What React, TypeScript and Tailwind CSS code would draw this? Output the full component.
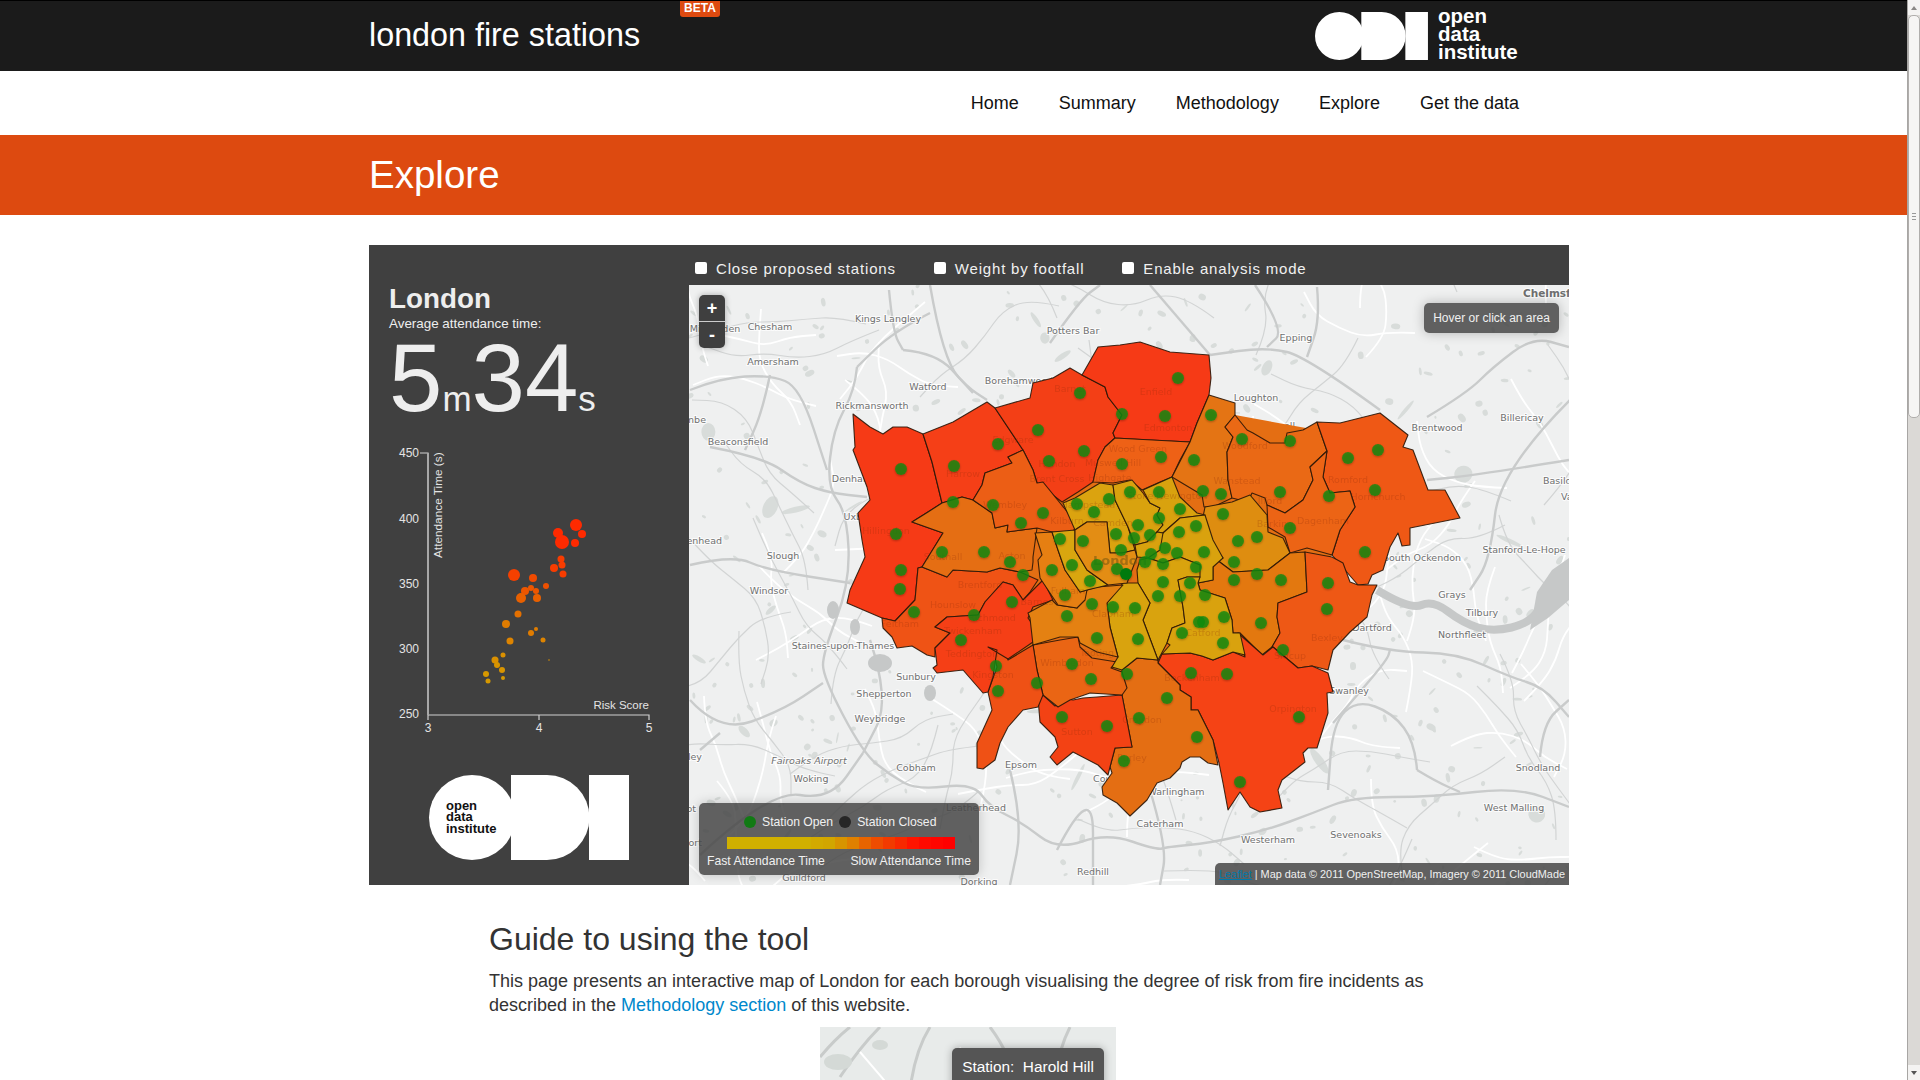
const boroughs: [string, string][] = [
  ['#f63a16', '853,414 870,427 883,434 893,427 907,427 923,434 932,462 942,503 928,512 912,522 943,533 922,567 918,568 915,600 895,621 882,618 847,603 850,590 865,557 862,540 858,513 870,500 867,487 853,450 855,447'],
  ['#f53f17', '923,434 953,422 987,402 995,408 1023,450 1008,457 1012,463 985,473 982,485 973,500 962,497 942,503 932,462'],
  ['#f33f16', '995,408 1030,398 1033,383 1053,378 1070,368 1082,375 1105,387 1108,397 1122,415 1113,433 1115,438 1105,447 1098,460 1093,482 1078,492 1062,502 1037,483 1033,470 1023,450'],
  ['#f63a16', '1082,375 1098,347 1120,345 1140,342 1170,352 1209,355 1211,378 1209,395 1197,423 1190,442 1150,440 1115,438 1113,433 1122,415 1108,397 1105,387'],
  ['#ee6116', '1115,438 1190,442 1180,460 1172,477 1160,482 1142,490 1130,480 1113,483 1093,482 1098,460 1105,447'],
  ['#e47414', '1190,442 1197,423 1209,395 1235,403 1235,415 1225,427 1233,437 1227,452 1228,480 1232,498 1213,507 1204,507 1202,495 1172,477'],
  ['#ea6915', '1235,415 1247,430 1253,433 1270,443 1285,443 1287,433 1303,430 1317,422 1327,451 1310,467 1313,480 1303,500 1285,513 1267,505 1265,498 1252,493 1248,502 1232,498 1228,480 1227,452 1233,437 1225,427'],
  ['#ef5815', '1317,422 1340,423 1380,413 1408,435 1403,447 1413,450 1428,490 1445,490 1460,518 1410,528 1410,545 1402,546 1398,533 1390,547 1383,570 1372,575 1368,584 1358,585 1332,555 1340,530 1355,507 1350,491 1330,493 1323,477 1327,451'],
  ['#ec6415', '1327,451 1310,467 1313,480 1303,500 1285,513 1267,505 1268,527 1285,537 1290,553 1307,548 1332,555 1340,530 1355,507 1350,491 1330,493 1323,477'],
  ['#de8d10', '1205,507 1232,502 1250,495 1267,515 1268,532 1283,538 1290,553 1268,570 1233,572 1217,560 1223,558 1212,547 1203,517'],
  ['#e3780f', '1305,552 1307,592 1278,603 1277,617 1280,633 1272,647 1262,655 1240,633 1233,633 1232,620 1225,598 1200,590 1198,583 1213,580 1213,567 1217,560 1233,572 1268,570 1290,553'],
  ['#ee5815', '1305,552 1332,557 1343,563 1350,582 1358,585 1377,585 1372,595 1367,617 1350,632 1333,650 1328,670 1312,666 1298,668 1273,647 1272,647 1280,633 1277,617 1278,603 1307,592'],
  ['#f54315', '1273,647 1263,655 1238,633 1245,657 1233,652 1213,660 1202,656 1190,653 1162,654 1158,663 1180,685 1180,690 1191,697 1191,710 1198,710 1213,740 1219,763 1223,783 1228,810 1240,792 1250,807 1260,812 1282,808 1278,790 1282,780 1305,762 1303,753 1308,748 1317,748 1328,713 1327,693 1333,692 1328,673 1312,666 1298,668'],
  ['#e46e13', '1122,670 1137,658 1158,660 1158,663 1180,685 1180,690 1191,697 1191,710 1198,710 1213,740 1218,765 1208,763 1200,757 1190,757 1182,762 1180,768 1170,778 1157,783 1147,800 1130,816 1117,803 1103,795 1102,787 1112,773 1110,767 1115,748 1132,747 1122,695 1123,680'],
  ['#f34214', '1043,695 1055,706 1063,698 1073,700 1083,698 1097,697 1122,695 1132,747 1115,748 1110,767 1108,775 1098,765 1073,752 1057,765 1050,757 1058,747 1055,737 1040,722 1038,698'],
  ['#ea6514', '1033,645 1060,640 1078,637 1080,647 1092,658 1117,662 1111,668 1122,672 1127,688 1122,695 1090,693 1070,700 1058,707 1043,695 1037,670'],
  ['#ef5115', '1033,645 1008,660 1005,650 992,647 997,667 988,692 992,710 977,743 977,768 983,769 995,760 1000,743 1008,727 1023,710 1038,707 1043,695 1037,670'],
  ['#ef5315', '922,567 947,577 953,570 987,572 1000,568 1020,572 1038,580 1030,592 1023,600 1013,585 1003,582 985,602 978,615 947,617 935,627 950,633 935,648 935,657 927,655 912,646 897,648 892,637 883,628 882,618 895,621 915,600 918,568'],
  ['#f53f16', '1003,582 985,602 978,615 947,617 935,627 950,633 935,648 937,665 933,668 937,673 963,670 983,693 988,692 993,677 997,650 988,647 1008,659 1033,642 1040,635 1028,618 1033,607 1053,600 1043,580 1033,590 1023,600 1013,585'],
  ['#e56e13', '912,522 928,512 942,503 962,497 973,500 992,513 995,528 1008,525 1007,532 1037,528 1033,557 1033,562 1032,570 1020,572 1000,568 987,572 953,570 947,577 922,567 943,533'],
  ['#ec5e15', '973,500 982,485 985,473 1012,463 1008,457 1023,450 1033,470 1037,483 1043,482 1078,525 1072,532 1052,532 1037,528 1007,532 1008,525 995,528 992,513'],
  ['#dba30f', '1075,498 1100,483 1113,485 1115,500 1128,527 1135,550 1122,553 1110,553 1107,522 1087,522 1075,530 1063,503'],
  ['#d9a20e', '1113,485 1132,480 1143,493 1150,503 1160,508 1157,515 1163,525 1157,532 1147,542 1135,545 1128,527 1115,500'],
  ['#d9a20e', '1143,490 1172,477 1180,497 1197,513 1205,515 1180,518 1163,533 1157,532 1163,525 1157,515 1160,508 1150,503'],
  ['#d9a20e', '1163,533 1180,518 1205,515 1213,540 1223,558 1213,567 1213,580 1198,583 1200,565 1180,557 1163,563 1148,558'],
  ['#d9a20e', '1135,545 1147,542 1157,532 1163,533 1160,550 1148,558 1137,557'],
  ['#d9a30e', '1140,560 1148,558 1163,563 1180,557 1200,565 1200,577 1187,577 1178,580 1183,607 1185,623 1172,628 1167,643 1158,660 1143,620 1150,603 1138,583 1137,570'],
  ['#d9a20e', '1200,577 1198,583 1200,590 1225,598 1232,620 1233,633 1240,633 1245,655 1233,652 1213,660 1202,656 1190,653 1162,654 1170,645 1167,643 1172,628 1185,623 1183,607 1178,580 1187,577'],
  ['#d9a30e', '1123,583 1138,583 1150,603 1143,620 1158,660 1137,658 1122,670 1112,667 1118,657 1110,627 1107,603'],
  ['#e48112', '1087,590 1097,587 1123,585 1107,603 1110,627 1118,657 1097,652 1080,643 1078,637 1060,637 1033,645 1030,618 1028,613 1052,600 1057,605 1077,608'],
  ['#e67f12', '1035,533 1052,532 1058,550 1065,570 1080,592 1087,590 1085,600 1077,608 1058,605 1040,578 1038,560 1042,555'],
  ['#d9a60f', '1052,532 1075,530 1075,550 1087,570 1108,585 1087,590 1080,592 1065,570 1058,550'],
  ['#e38d14', '1075,530 1087,522 1107,522 1110,553 1122,553 1135,550 1137,557 1127,583 1108,585 1087,570 1075,550'],
]

const dots = '1080,393 1122,414 1165,416 1178,378 1211,415 1038,430 998,444 954,466 901,469 1084,451 1049,461 1122,464 1161,457 1194,460 953,502 993,505 1043,513 1021,523 1077,504 1094,512 1109,499 1130,492 1159,492 896,534 942,552 984,552 1010,562 1023,575 901,570 900,589 1060,539 1083,541 1072,565 1052,570 1097,565 1090,581 1065,595 1121,550 1138,525 1116,534 1134,538 1150,535 1159,518 1180,509 1179,532 1196,526 1165,548 1151,554 1177,553 1145,562 1163,564 1117,569 1126,574 1196,567 1163,582 1190,583 1158,596 1180,596 1135,608 1113,607 1092,604 1067,616 1097,638 1138,639 1182,633 1199,622 1072,664 1203,491 1221,494 1280,492 1329,496 1375,490 1223,514 1290,528 1238,541 1257,537 1234,562 1257,574 1281,580 1234,580 1365,552 1328,583 1327,609 1261,623 1224,617 1223,643 1283,650 1205,595 1203,622 1204,552 1242,439 1290,441 1348,458 1378,450 914,612 974,615 1012,602 961,640 996,666 998,691 1037,683 1091,679 1062,717 1107,726 1127,674 1139,718 1124,761 1167,698 1197,737 1191,673 1227,674 1299,717 1240,782'
  .split(' ')
  .map((p) => p.split(',').map(Number))

const greyRoads = [
  '857,367 855,390 833,430 827,487 847,513 850,583 823,653 823,677 863,753 890,775 917,790 973,783 990,807 1023,823 1057,850 1107,833 1157,850 1167,847 1210,843 1267,830 1313,813 1353,797 1433,797 1517,787 1569,807',
  '1333,723 1353,700 1387,660 1390,650',
  '1380,410 1307,357 1267,347 1210,355',
  '1317,287 1320,320 1307,357',
  '930,313 893,332 857,367',
  '903,350 937,353 967,387 987,400',
  '930,285 943,360 973,393',
  '710,447 763,457 800,483 830,493 867,497',
  '690,565 733,555 767,570 850,583',
  '690,390 720,378 770,375 800,387 827,470',
  '770,375 762,413 745,450',
  '690,700 720,733 783,710 823,683',
  '720,733 700,750',
  '1569,460 1477,475 1427,480',
  '1427,417 1467,393 1493,367 1533,337 1569,347',
  '1343,640 1390,652 1457,653 1510,677 1543,687 1569,717',
  '1417,770 1415,743 1393,713 1357,700 1333,723 1328,790',
  '1540,757 1543,723 1569,700',
  '1417,770 1437,782 1460,792',
  '1050,343 1080,300 1100,285',
  '1150,285 1180,320 1210,355',
  '1255,285 1285,330 1267,347',
  '1570,400 1500,470 1490,560 1470,590',
  '889,290 893,332 903,350',
  '1057,850 1093,780 1093,885',
  '870,640 890,700 863,753',
  '1010,770 1023,823 1010,885',
  '700,855 770,790 830,800 863,753',
  '1150,790 1167,847 1160,885',
]

// turns a point list into a soft curve, the tiles have no sharp corners
const smooth = (s: string) => {
  const p = s.split(' ').map((q) => q.split(',').map(Number))
  let d = `M${p[0][0]} ${p[0][1]}`
  for (let i = 1; i < p.length - 1; i++) {
    d += `Q${p[i][0]} ${p[i][1]} ${(p[i][0] + p[i + 1][0]) / 2} ${(p[i][1] + p[i + 1][1]) / 2}`
  }
  const l = p[p.length - 1]
  return `${d}L${l[0]} ${l[1]}`
}

const hash = (n: number) => {
  const v = Math.sin(n * 12.9898) * 43758.5453
  return v - Math.floor(v)
}

const wander = (i: number, n: number, step: number) => {
  let x = 689 + hash(i + 1) * 880
  let y = 285 + hash(i + 500) * 600
  let a = hash(i + 900) * 6.28
  const pts: string[] = [`${x.toFixed(0)},${y.toFixed(0)}`]
  for (let k = 0; k < n; k++) {
    a += (hash(i * 31 + k) - 0.5) * 1.3
    x += Math.cos(a) * step
    y += Math.sin(a) * step
    pts.push(`${x.toFixed(0)},${y.toFixed(0)}`)
  }
  return smooth(pts.join(' '))
}

const thinGrey = Array.from({ length: 55 }, (_, i) => wander(i, 6, 30))
const thinWhite = Array.from({ length: 70 }, (_, i) => wander(i + 100, 5, 26))

// little patches of woodland, same every render
const woods = Array.from({ length: 520 }, (_, i) => ({
  x: 689 + hash(i + 2000) * 880,
  y: 285 + hash(i + 3000) * 600,
  rx: 1 + hash(i + 4000) * (i % 12 === 0 ? 14 : 4),
  ry: 0.8 + hash(i + 5000) * (i % 12 === 0 ? 8 : 2.5),
  r: hash(i + 6000) * 180,
}))

const labels: [string, number, number][] = [
  ['Kings Langley', 888, 318], ['Chesham', 770, 326], ['Missenden', 715, 328], ['Potters Bar', 1073, 330],
  ['Amersham', 773, 361], ['Watford', 928, 386], ['Borehamwood', 1019, 380], ['Rickmansworth', 872, 405],
  ['Beaconsfield', 738, 441], ['Denham', 852, 478], ['Uxbridge', 865, 516], ['Slough', 783, 555],
  ['Windsor', 769, 590], ['Epping', 1296, 337], ['Loughton', 1256, 397], ['Chigwell', 1275, 425],
  ['Brentwood', 1437, 427], ['Billericay', 1522, 417], ['Stanford-Le-Hope', 1524, 549], ['South Ockendon', 1422, 557],
  ['Grays', 1452, 594], ['Staines-upon-Thames', 843, 645], ['Sunbury', 916, 676], ['Shepperton', 884, 693],
  ['Weybridge', 880, 718], ['Woking', 811, 778], ['Cobham', 916, 767], ['Epsom', 1021, 764],
  ['Leatherhead', 976, 807], ['Guildford', 804, 877], ['Dorking', 979, 881], ['Coulsdon', 1115, 778],
  ['Caterham', 1160, 823], ['Warlingham', 1176, 791], ['Westerham', 1268, 839], ['Sevenoaks', 1356, 834],
  ['Redhill', 1093, 871], ['Swanley', 1349, 690], ['Dartford', 1372, 627], ['Northfleet', 1462, 634],
  ['Tilbury', 1482, 612], ['Snodland', 1538, 767], ['West Malling', 1514, 807],
]

const covered: [string, number, number][] = [
  ['Barnet', 1070, 388], ['Enfield', 1156, 391], ['Edmonton', 1168, 427], ['Wood Green', 1138, 448],
  ['Muswell Hill', 1113, 462], ['Highgate', 1110, 477], ['Edgware', 1013, 439], ['Hendon', 1057, 463],
  ['Brent Cross', 1057, 478], ['Harrow', 963, 473], ['Wembley', 1005, 504], ['Kilburn', 1067, 520],
  ['Hampstead', 1088, 504], ['Camden', 1113, 522], ['Southall', 943, 556], ['Acton', 1012, 555],
  ['Brentford', 980, 584], ['Fulham', 1068, 590], ['Barnes', 1037, 601], ['Clapham', 1113, 613],
  ['Tooting', 1097, 652], ['Wimbledon', 1067, 662], ['Hounslow', 953, 604], ['Richmond', 992, 617],
  ['Twickenham', 973, 630], ['Feltham', 900, 623], ['Teddington', 972, 653], ['Kingston', 993, 674],
  ['Sutton', 1077, 731], ['Croydon', 1142, 719], ['Purley', 1132, 757], ['Beckenham', 1192, 677],
  ['Orpington', 1293, 708], ['Catford', 1203, 632], ['Bexley', 1327, 637], ['Sidcup', 1290, 655],
  ['Woodford', 1245, 445], ['Wanstead', 1237, 480], ['Ilford', 1270, 500], ['Barking', 1275, 523],
  ['Dagenham', 1323, 520], ['Romford', 1348, 479], ['Hornchurch', 1378, 496], ['Stoke Newington', 1167, 495],
  ['Hillingdon', 886, 530],
]

const clipped: [string, number, number][] = [
  ['Wycombe', 706, 419], ['Maidenhead', 722, 540], ['Henley', 702, 756], ['Airport', 702, 842], ['Bagshot', 696, 808],
]

const risk: [number, number, number, string][] = [
  [576, 525, 6, '#ff2a00'], [582, 534, 4, '#ff2a00'], [558, 533, 5, '#ff2a00'], [562, 542, 7, '#ff2a00'],
  [575, 543, 4, '#ff2a00'], [561, 559, 3.5, '#f83c00'], [562, 565, 3.5, '#f83c00'], [554, 568, 4, '#f83c00'],
  [563, 574, 3.5, '#f83c00'], [514, 575, 6, '#f54000'], [533, 578, 4, '#f04a00'], [546, 586, 3, '#ee5000'],
  [531, 588, 3, '#ec5600'], [525, 591, 4, '#ec5600'], [536, 591, 3, '#ec5600'], [521, 598, 5, '#e86000'],
  [537, 598, 4, '#e86000'], [518, 614, 3.5, '#e47000'], [506, 624, 4, '#e07c00'], [536, 629, 2, '#e07c00'],
  [531, 633, 3, '#e07c00'], [543, 640, 2.5, '#de8400'], [510, 641, 3.5, '#de8400'], [503, 655, 2.5, '#da9000'],
  [495, 660, 3.5, '#da9000'], [549, 660, 0.8, '#da9000'], [497, 665, 3, '#d89400'], [502, 670, 3, '#d89400'],
  [486, 674, 3, '#d69800'], [503, 678, 2, '#d69800'], [488, 681, 2.5, '#d69800'],
]

const legendBar = ['#d0b000', '#d0b000', '#d0b000', '#d0b000', '#d0b000', '#d0b000', '#d0b000', '#d2aa00', '#d2a600', '#d89400', '#e08000', '#e86400', '#ee4c00', '#f23a00', '#f82800', '#ff1400', '#ff0a00', '#ff0500', '#ff0000']

const navItems = ['Home', 'Summary', 'Methodology', 'Explore', 'Get the data']
const options = ['Close proposed stations', 'Weight by footfall', 'Enable analysis mode']

const OdiMark = ({ x, y, h, fill }: { x: number; y: number; h: number; fill: string }) => {
  const r = h / 2
  const u = h / 85
  return (
    <g fill={fill}>
      <ellipse cx={x + 43 * u} cy={y + r} rx={43 * u} ry={r} />
      <path d={`M${x + 82 * u} ${y}H${x + 118 * u}A${r} ${r} 0 0 1 ${x + 118 * u} ${y + h}H${x + 82 * u}Z`} />
      <rect x={x + 160 * u} y={y} width={40 * u} height={h} />
    </g>
  )
}

const Chart = () => (
  <svg viewBox="369 445 320 300" className="block w-[320px] h-[300px]">
    <path d="M420 453H428V715H649V720M428 715V720M539 715V720" fill="none" stroke="#d0d0d0" strokeWidth="1.2" />
    <path d="M428 453V715" stroke="#a8a8a8" strokeWidth="2" />
    {[[450, 453], [400, 519], [350, 584], [300, 649], [250, 714]].map(([v, y]) => (
      <text key={v} x="419" y={y + 4} textAnchor="end" fontSize="12" fill="#e4e4e4">{v}</text>
    ))}
    {[[3, 428], [4, 539], [5, 649]].map(([v, x]) => (
      <text key={v} x={x} y="732" textAnchor="middle" fontSize="12" fill="#e4e4e4">{v}</text>
    ))}
    <text x="649" y="709" textAnchor="end" fontSize="11.5" fill="#e4e4e4">Risk Score</text>
    <text transform="translate(442 558) rotate(-90)" fontSize="11.8" fill="#e4e4e4">Attendance Time (s)</text>
    {risk.map(([x, y, r, c], i) => (
      <circle key={i} cx={x} cy={y} r={r} fill={c} />
    ))}
  </svg>
)

const LondonMap = () => (
  <svg viewBox="689 285 880 600" className="block w-[880px] h-[600px] font-['DejaVu_Sans',sans-serif]">
    <defs>
      <filter id="dotShadow" x="-50%" y="-50%" width="200%" height="200%">
        <feDropShadow dx="0" dy="1" stdDeviation="1" floodColor="#000" floodOpacity="0.35" />
      </filter>
    </defs>
    <rect x="689" y="285" width="880" height="600" fill="#eff0f0" />
    {woods.map((w, i) => (
      <ellipse key={i} cx={w.x} cy={w.y} rx={w.rx} ry={w.ry} fill="#d8dcda" transform={`rotate(${w.r} ${w.x} ${w.y})`} />
    ))}
    {thinWhite.map((d, i) => (
      <path key={i} d={d} fill="none" stroke="#ffffff" strokeWidth="1.8" />
    ))}
    {thinGrey.map((d, i) => (
      <path key={i} d={d} fill="none" stroke="#d2d4d4" strokeWidth="1.2" />
    ))}
    {greyRoads.map((d, i) => (
      <path key={i} d={smooth(d)} fill="none" stroke="#c9cbcb" strokeWidth="2.4" />
    ))}
    <path d={smooth('1377,590 1410,610 1433,600 1463,623 1493,632 1530,623 1545,600')} fill="none" stroke="#c6c8c8" strokeWidth="8" />
    <polygon points="1537,592 1552,570 1569,558 1569,600 1548,618 1530,630" fill="#c6c8c8" />
    <ellipse cx="880" cy="663" rx="12" ry="9" fill="#c6c8c8" />
    <ellipse cx="833" cy="610" rx="6" ry="9" fill="#c6c8c8" />
    <ellipse cx="855" cy="627" rx="5" ry="8" fill="#c6c8c8" />
    <ellipse cx="930" cy="693" rx="6" ry="8" fill="#c6c8c8" />
    <g fontSize="9.5" fill="#6f7070" stroke="#ffffff" strokeWidth="2" paintOrder="stroke" textAnchor="middle" strokeOpacity="0.8">
      {labels.map(([t, x, y]) => (
        <text key={t} x={x} y={y + 3.5}>{t}</text>
      ))}
      {clipped.map(([t, x, y]) => (
        <text key={t} x={x} y={y + 3.5} textAnchor="end">{t}</text>
      ))}
      <text x="1543" y="484" textAnchor="start">Basildon</text>
      <text x="1561" y="500" textAnchor="start">Vange</text>
      <text x="1523" y="297" textAnchor="start" fontWeight="700" fontSize="10.5">Chelmsford</text>
      <text x="809" y="764" fontStyle="italic">Fairoaks Airport</text>
    </g>
    <polygon points="1000,415 1082,375 1209,395 1235,415 1317,430 1320,480 1332,555 1305,590 1272,650 1180,685 1122,695 1043,690 1000,650 1030,600 1000,560 930,560 945,505" fill="#e46e13" />
    <g stroke="#2a1608" strokeWidth="1.1" strokeLinejoin="round" strokeOpacity="0.9">
      {boroughs.map(([c, pts], i) => (
        <polygon key={i} points={pts} fill={c} />
      ))}
    </g>
    <g fontSize="9.5" fill="#8a2a08" opacity="0.25" textAnchor="middle">
      {covered.map(([t, x, y]) => (
        <text key={t} x={x} y={y + 3.5}>{t}</text>
      ))}
    </g>
    <text x="1120" y="565" textAnchor="middle" fontSize="13" fontWeight="700" fill="#7c5a10" opacity="0.6">London</text>
    <g filter="url(#dotShadow)">
      {dots.map(([x, y], i) => (
        <circle key={i} cx={x} cy={y} r="6" fill={x === 1126 ? '#007a0a' : '#0f8a12'} fillOpacity={x === 1126 ? 1 : 0.8} />
      ))}
    </g>
  </svg>
)

const Scrollbar = () => (
  <div className="w-[13px] h-[1080px] shrink-0 flex flex-col bg-[#dbd9d6] border-l border-[#a8a6a4]">
    <div className="h-[15px] flex items-center justify-center bg-[#f4f3f2]">
      <div className="w-0 h-0 border-x-[3px] border-x-transparent border-b-[4px] border-b-[#8a8886]" />
    </div>
    <div className="h-[403px] rounded-[5px] bg-[#f6f5f4] border border-[#b0aeac] flex flex-col items-center justify-center gap-[2px]">
      <div className="w-[4px] h-px bg-[#999]" />
      <div className="w-[4px] h-px bg-[#999]" />
      <div className="w-[4px] h-px bg-[#999]" />
    </div>
    <div className="flex-1" />
    <div className="h-[15px] flex items-center justify-center bg-[#f4f3f2]">
      <div className="w-0 h-0 border-x-[3px] border-x-transparent border-t-[4px] border-t-[#555]" />
    </div>
  </div>
)

export default function App() {
  return (
    <div className="flex h-[1080px] overflow-hidden bg-white font-['Liberation_Sans',Arial,sans-serif]">
      <div className="flex-1 min-w-0">
        <header className="h-[71px] bg-[#1b1b1b] border-t border-black">
          <div className="relative w-[1200px] ml-[369px] h-full flex items-center justify-between">
            <a href="#" className="text-[32.3px] leading-[38px] mt-[-2px] text-white">london fire stations</a>
            <span className="absolute left-[311px] top-0 w-[40px] h-[16px] rounded-b-[3px] bg-[#dd4a10] text-white text-[12px] leading-[14px] font-bold text-center">BETA</span>
            <svg viewBox="1315 0 254 70" className="w-[254px] h-[70px]">
              <OdiMark x={1315} y={11} h={48} fill="#ffffff" />
              <g fill="#ffffff" fontSize="20.5" fontWeight="700">
                <text x="1438" y="22">open</text>
                <text x="1438" y="40">data</text>
                <text x="1438" y="58">institute</text>
              </g>
            </svg>
          </div>
        </header>
        <nav className="h-[64px] bg-white">
          <div className="ml-[369px] w-[1150px] h-full flex items-center justify-end gap-[40px]">
            {navItems.map((n) => (
              <a key={n} href="#" className="text-[18px] text-[#111]">{n}</a>
            ))}
          </div>
        </nav>
        <div className="h-[80px] bg-[#dd4a10] flex items-center">
          <h1 className="ml-[369px] text-[38.5px] leading-[46px] text-white">Explore</h1>
        </div>
        <section className="mt-[30px] ml-[369px] w-[1200px] h-[640px] flex bg-[#404040]">
          <aside className="w-[320px] shrink-0">
            <div className="pl-[20px] pt-[38px] text-[#eeeeee]">
              <h2 className="text-[27.8px] leading-[32px] font-bold">London</h2>
              <p className="mt-[1px] text-[13.4px] leading-[16px]">Average attendance time:</p>
              <p className="mt-[-2px] text-[96px] leading-[96px] whitespace-nowrap">
                5<span className="text-[35px] leading-none">m</span>34<span className="text-[35px] leading-none">s</span>
              </p>
            </div>
            <div className="mt-[19px]">
              <Chart />
            </div>
            <svg viewBox="369 770 320 95" className="block mt-[25px] w-[320px] h-[95px]">
              <OdiMark x={429} y={775} h={85} fill="#ffffff" />
              <g fill="#111111" fontSize="13" fontWeight="700">
                <text x="446" y="810">open</text>
                <text x="446" y="821">data</text>
                <text x="446" y="833">institute</text>
              </g>
            </svg>
          </aside>
          <div className="w-[880px]">
            <div className="h-[40px] pl-[6px] pt-[8px] flex items-center gap-[38px]">
              {options.map((o) => (
                <label key={o} className="flex items-center gap-[9px] text-[15px] tracking-[0.82px] text-[#f0f0f0]">
                  <input type="checkbox" className="appearance-none w-[12px] h-[12px] bg-white rounded-[2px] mt-[-2px]" />
                  {o}
                </label>
              ))}
            </div>
            <div className="relative h-[600px] overflow-hidden">
              <LondonMap />
              <div className="absolute left-[10px] top-[10px] w-[26px] h-[53px] rounded-[5px] bg-[#3f3f3f] shadow-[0_0_6px_rgba(0,0,0,0.3)] text-white font-bold text-[18px] text-center leading-[26px]">
                <div className="h-[27px] border-b border-[#cccccc]">+</div>
                <div className="h-[26px]">-</div>
              </div>
              <div className="absolute right-[10px] top-[18px] w-[135px] h-[30px] rounded-[5px] bg-[#464646]/85 shadow-[0_0_12px_rgba(0,0,0,0.25)] text-[12px] leading-[30px] text-center text-[#f0f0f0]">
                Hover or click an area
              </div>
              <div className="absolute left-[10px] bottom-[10px] w-[280px] h-[72px] rounded-[5px] bg-[#464646]/85 shadow-[0_0_12px_rgba(0,0,0,0.2)] text-[12.2px] text-[#f0f0f0]">
                <div className="h-[34px] pt-[4px] flex items-center pl-[45px]">
                  <span className="w-[12px] h-[12px] rounded-full bg-[#117a14]" />
                  <span className="ml-[6px]">Station Open</span>
                  <span className="ml-[6px] w-[12px] h-[12px] rounded-full bg-[#262626]" />
                  <span className="ml-[6px]">Station Closed</span>
                </div>
                <div className="ml-[28px] flex h-[12px]">
                  {legendBar.map((c, i) => (
                    <span key={i} className="w-[12px]" style={{ backgroundColor: c }} />
                  ))}
                </div>
                <div className="mt-[4px] px-[8px] flex justify-between leading-[16px]">
                  <span>Fast Attendance Time</span>
                  <span>Slow Attendance Time</span>
                </div>
              </div>
              <div className="absolute right-0 bottom-0 h-[22px] w-[354px] pl-[4px] rounded-tl-[5px] bg-[#464646]/85 text-[10.9px] leading-[22px] whitespace-nowrap text-[#f0f0f0]">
                <a href="#" className="text-[#0078a8] underline">Leaflet</a> | Map data © 2011 OpenStreetMap, Imagery © 2011 CloudMade
              </div>
            </div>
          </div>
        </section>
        <section className="ml-[489px] w-[980px] mt-[35px] text-[#333333]">
          <h2 className="text-[32px] leading-[38px]">Guide to using the tool</h2>
          <p className="mt-[11px] text-[18px] leading-[24px]">
            This page presents an interactive map of London for each borough visualising the degree of risk from fire incidents as described in the{' '}
            <a href="#" className="text-[#0088cc]">Methodology section</a> of this website.
          </p>
          <div className="relative mt-[10px] ml-[331px] w-[296px] h-[120px] bg-[#e8ebea] overflow-hidden">
            <svg viewBox="0 0 296 120" className="block w-[296px] h-[120px]">
              <path d="M0 30Q15 12 30 0M20 50Q40 20 60 0M110 0Q85 40 88 120M170 0Q200 40 190 70M250 0Q235 30 240 50" fill="none" stroke="#c8cbca" strokeWidth="3" />
              <path d="M40 25L70 60M140 20L150 50" fill="none" stroke="#ffffff" strokeWidth="2" />
              <ellipse cx="18" cy="35" rx="14" ry="8" fill="#d4d9d6" />
              <ellipse cx="60" cy="18" rx="8" ry="5" fill="#d4d9d6" />
            </svg>
            <div className="absolute left-[132px] top-[21px] w-[152px] h-[60px] rounded-[5px] bg-[#555555] shadow-[0_0_8px_rgba(0,0,0,0.3)] text-[15.4px] leading-[37px] text-center text-white">
              Station:&nbsp; Harold Hill
            </div>
          </div>
        </section>
      </div>
      <Scrollbar />
    </div>
  )
}
